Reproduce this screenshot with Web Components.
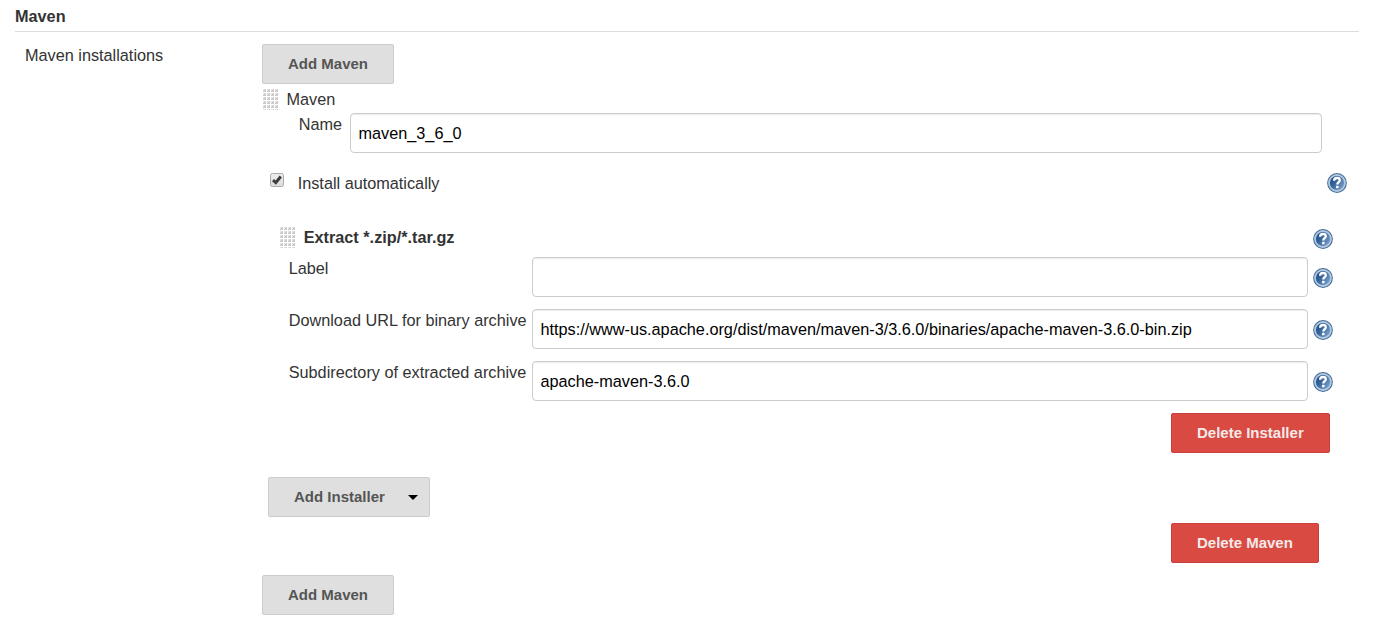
<!DOCTYPE html>
<html lang="en">
<head>
<meta charset="utf-8">
<title>Maven</title>
<style>
body{margin:0;background:#fff;color:#333;font:16.25px/16px "Liberation Sans",Arial,sans-serif}
</style>
</head>
<body>
<maven-config></maven-config>
<script>
const define = (name, html) => {
  const template = document.createElement('template');
  template.innerHTML = html;
  customElements.define(name, class extends HTMLElement {
    constructor() {
      super();
      this.attachShadow({mode: 'open'}).append(template.content.cloneNode(true));
    }
  });
};

define('push-button', `<style>
:host{display:flex;align-items:center;box-sizing:border-box;height:40px;padding:0 25px;border:1px solid #ccc;border-radius:2px;background:#dfdfdf;color:#555;font-size:15px;line-height:18px;font-weight:bold;white-space:nowrap}
:host([danger]){background:#d94b42;border-color:#c9403a;color:#f4e9e9}
:host([menu]){padding-right:11px}
svg{display:none;margin-left:23px}
:host([menu]) svg{display:block}
</style><slot></slot><svg width="10" height="6" viewBox="0 0 10 6"><path d="M0 1h10L5 6z" fill="#000"/></svg>`);

define('text-field', `<style>
:host{display:block;box-sizing:border-box;height:40px;padding:11px 7.5px 0;border:1px solid #ccc;border-radius:4px;background:#fff;color:#000;box-shadow:inset 0 1px 1px rgba(0,0,0,.075);white-space:pre}
</style><slot></slot>`);

define('drag-grip', `<style>:host{display:block;width:15px;height:22px}svg{display:block}</style>
<svg width="15" height="22"><defs><pattern id="d" width="4" height="4" patternUnits="userSpaceOnUse"><rect width="3" height="3" fill="#e4e3e2"/><rect x="1" y="1" width="2" height="2" fill="#cbc9c7"/><rect x="2" width="1" height="1" fill="#cbc9c7"/><rect y="2" width="1" height="1" fill="#cbc9c7"/></pattern></defs><rect width="15" height="21" fill="url(#d)"/></svg>`);

define('help-icon', `<style>:host{display:block;width:20px;height:20px}svg{display:block}</style>
<svg width="20" height="20" viewBox="0 0 20 20"><defs><linearGradient id="g" x1="0" y1="0" x2="1" y2=".7"><stop stop-color="#1c467c"/><stop offset=".45" stop-color="#326299"/><stop offset="1" stop-color="#7fa3cb"/></linearGradient></defs>
<circle cx="10" cy="10" r="9.9" fill="#426c9b"/><circle cx="10" cy="10" r="8" fill="url(#g)" stroke="#b3c7de" stroke-width="1.8"/>
<path d="M7.1 7.8C7.1 5.9 8.4 5 10 5s2.8.9 2.8 2.3c0 1.9-2.5 2-2.5 4.2" fill="none" stroke="#fff" stroke-width="2.3"/><rect x="9" y="12.8" width="2.5" height="2.4" rx=".4" fill="#fff"/></svg>`);

define('check-box', `<style>:host{display:block;width:14px;height:14px}svg{display:block}</style>
<svg width="14" height="14" viewBox="0 0 14 14"><defs><linearGradient id="b" x2="0" y2="1"><stop stop-color="#eee"/><stop offset="1" stop-color="#dcdcdc"/></linearGradient></defs><rect x=".5" y=".5" width="13" height="13" rx="2" fill="url(#b)" stroke="#aaa"/><path d="M3 7.2l2.8 2.4L10.8 3.5" fill="none" stroke="#3c3c3c" stroke-width="3"/></svg>`);

define('installer-row', `<style>
:host{display:grid;grid-template-columns:243px 776px 20px;column-gap:0;height:40px;margin:0 0 12px 27px}
.label{padding-top:3px;margin-left:-.3px;white-space:nowrap}
help-icon{margin:11px 0 0 5px}
</style><div class="label"><slot name="label"></slot></div><text-field><slot></slot></text-field><help-icon></help-icon>`);

define('tool-installer', `<style>
:host{display:block}
.head{display:flex;height:30px;margin-left:18px}
.head b{margin:2px 0 0 8.7px;flex:1}
.head help-icon{margin:2px 26px 0 0}
.actions{display:flex;margin-left:909px}
</style>
<div class="head"><drag-grip></drag-grip><b>Extract *.zip/*.tar.gz</b><help-icon></help-icon></div>
<installer-row><span slot="label">Label</span></installer-row>
<installer-row><span slot="label">Download URL for binary archive</span>https://www-us.apache.org/dist/maven/maven-3/3.6.0/binaries/apache-maven-3.6.0-bin.zip</installer-row>
<installer-row><span slot="label">Subdirectory of extracted archive</span>apache-maven-3.6.0</installer-row>
<div class="actions"><push-button danger>Delete Installer</push-button></div>`);

define('maven-item', `<style>
:host{display:block}
.head{display:flex;height:24px;padding:5px 0 0 1px}
.head span{margin:2px 0 0 8.5px}
.name{display:grid;grid-template-columns:51px 972px;margin-left:37px}
.name span{padding-top:3px;margin-left:-.3px}
.auto{display:flex;height:54px;padding:20px 12px 0 8px}
.auto span{flex:1;margin:2px 0 0 13.7px}
.add{display:flex;margin:24px 0 6px 6px}
.remove{display:flex;margin-left:909px}
</style>
<div class="head"><drag-grip></drag-grip><span>Maven</span></div>
<div class="name"><span>Name</span><text-field>maven_3_6_0</text-field></div>
<div class="auto"><check-box></check-box><span>Install automatically</span><help-icon></help-icon></div>
<tool-installer></tool-installer>
<div class="add"><push-button menu>Add Installer</push-button></div>
<div class="remove"><push-button danger>Delete Maven</push-button></div>`);

define('maven-config', `<style>
:host{display:block;box-sizing:border-box;height:621px;padding:8px 14px 0 15px;overflow:hidden}
h1{margin:0;height:23px;border-bottom:1px solid #ddd;font:inherit;font-weight:bold}
main{display:grid;grid-template-columns:237px 1097px;padding:12px 0 0 10px}
.title{padding-top:3px}
.add{display:flex}
maven-item{margin-bottom:12px}
</style>
<h1>Maven</h1>
<main><div class="title">Maven installations</div>
<section><div class="add"><push-button>Add Maven</push-button></div><maven-item></maven-item><div class="add"><push-button>Add Maven</push-button></div></section></main>`);
</script>
</body>
</html>
